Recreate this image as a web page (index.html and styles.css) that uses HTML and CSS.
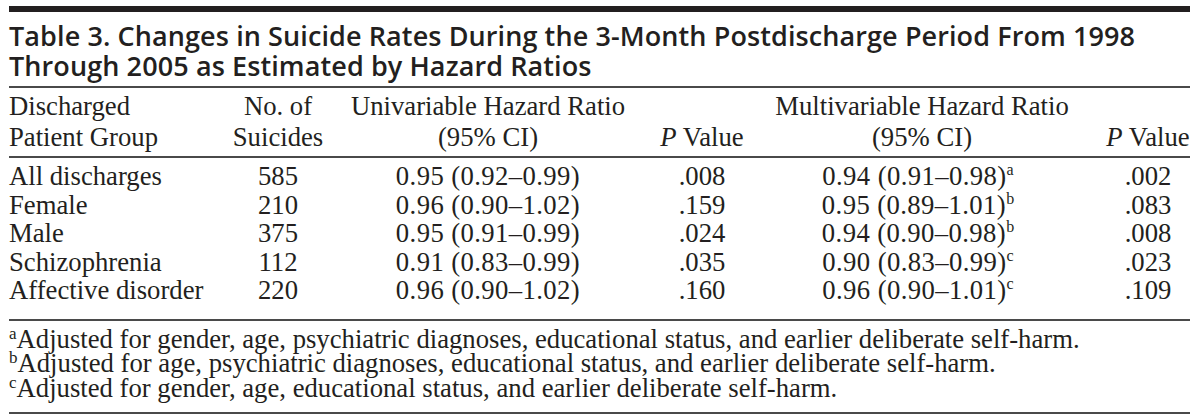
FILE: index.html
```html
<!DOCTYPE html>
<html lang="en">
<head>
<meta charset="utf-8">
<title>Table 3</title>
<link rel="stylesheet" href="styles.css">
</head>
<body>
<div class="page">
  <div class="topbar"></div>
  <h1 class="title">Table 3. Changes in Suicide Rates During the 3-Month Postdischarge Period From 1998<br>Through 2005 as Estimated by Hazard Ratios</h1>
  <table class="data">
    <colgroup>
      <col class="w1"><col class="w2"><col class="w3"><col class="w4"><col class="w5"><col class="w6">
    </colgroup>
    <thead>
      <tr>
        <th class="left">Discharged<br>Patient Group</th>
        <th>No. of<br>Suicides</th>
        <th>Univariable Hazard Ratio<br>(95% CI)</th>
        <th class="bottom"><i>P</i> Value</th>
        <th>Multivariable Hazard Ratio<br>(95% CI)</th>
        <th class="bottom last"><i>P</i> Value</th>
      </tr>
    </thead>
    <tbody>
      <tr><td class="left">All discharges</td><td>585</td><td class="ci">0.95 (0.92–0.99)</td><td>.008</td><td class="ci multi">0.94 (0.91–0.98)<sup>a</sup></td><td class="last">.002</td></tr>
      <tr><td class="left">Female</td><td>210</td><td class="ci">0.96 (0.90–1.02)</td><td>.159</td><td class="ci multi">0.95 (0.89–1.01)<sup>b</sup></td><td class="last">.083</td></tr>
      <tr><td class="left">Male</td><td>375</td><td class="ci">0.95 (0.91–0.99)</td><td>.024</td><td class="ci multi">0.94 (0.90–0.98)<sup>b</sup></td><td class="last">.008</td></tr>
      <tr><td class="left">Schizophrenia</td><td>112</td><td class="ci">0.91 (0.83–0.99)</td><td>.035</td><td class="ci multi">0.90 (0.83–0.99)<sup>c</sup></td><td class="last">.023</td></tr>
      <tr><td class="left">Affective disorder</td><td>220</td><td class="ci">0.96 (0.90–1.02)</td><td>.160</td><td class="ci multi">0.96 (0.90–1.01)<sup>c</sup></td><td class="last">.109</td></tr>
    </tbody>
  </table>
  <div class="notes">
    <p><sup>a</sup>Adjusted for gender, age, psychiatric diagnoses, educational status, and earlier deliberate self-harm.</p>
    <p><sup>b</sup>Adjusted for age, psychiatric diagnoses, educational status, and earlier deliberate self-harm.</p>
    <p><sup>c</sup>Adjusted for gender, age, educational status, and earlier deliberate self-harm.</p>
  </div>
</div>
</body>
</html>
```
FILE: styles.css
```css
html, body {
  margin: 0;
  padding: 0;
  background: #ffffff;
}
.page {
  width: 1181px;
  margin-left: 9px;
  color: #231f20;
  font-family: "Liberation Serif", "Times New Roman", serif;
}
.topbar {
  margin-top: 6px;
  height: 6px;
  background: #231f20;
}
.title {
  margin: 0;
  padding: 9px 0 5px;
  font-family: "Open Sans", "Noto Sans", sans-serif;
  font-weight: 600;
  font-size: 27px;
  line-height: 30px;
  letter-spacing: 0.1px;
  border-bottom: 2px solid #4a4a4a;
}
.data {
  width: 1181px;
  border-collapse: collapse;
  table-layout: fixed;
  font-size: 26.7px;
}
.w1 { width: 221px; }
.w2 { width: 96px; }
.w3 { width: 324px; }
.w4 { width: 104px; }
.w5 { width: 336px; }
.w6 { width: 100px; }
.data th {
  font-weight: normal;
  line-height: 31px;
  padding: 3px 0 3px;
  text-align: center;
  vertical-align: top;
  border-bottom: 2px solid #4a4a4a;
}
.data th.bottom {
  vertical-align: bottom;
}
.data td {
  line-height: 28.5px;
  padding: 0;
  text-align: center;
  white-space: nowrap;
}
.data td.ci {
  letter-spacing: 0.4px;
}
.data td.multi {
  padding-right: 8px;
}
.data .left {
  text-align: left;
}
.data .last {
  padding-left: 16px;
}
.data tbody tr:first-child td {
  padding-top: 4px;
}
.data tbody tr:last-child td {
  padding-bottom: 14px;
  border-bottom: 2px solid #4a4a4a;
}
.data sup {
  font-size: 16px;
  line-height: 0;
  vertical-align: 10px;
  letter-spacing: 0;
}
.notes {
  padding: 6px 0 12px;
  font-size: 26.7px;
  line-height: 24.5px;
  border-bottom: 2px solid #4a4a4a;
}
.notes p {
  margin: 0;
  white-space: nowrap;
}
.notes sup {
  font-size: 17px;
  line-height: 0;
  vertical-align: 9px;
}
```
